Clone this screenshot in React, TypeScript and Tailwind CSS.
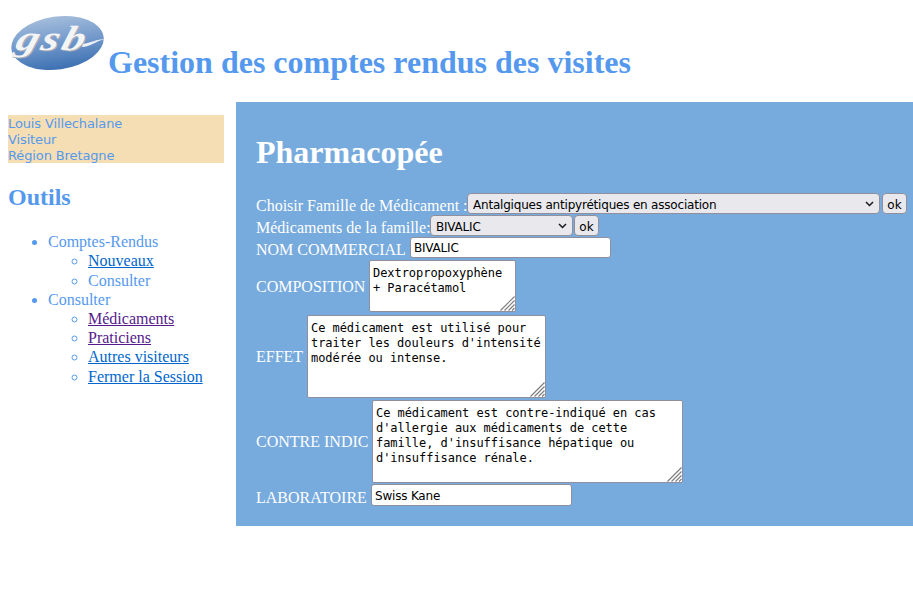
import React from 'react'

const control = 'font-["DejaVu_Sans"] text-[12px] tracking-[-0.2px] text-black'
const inputCls = `w-[201px] rounded-[3px] border border-[#8f8f9d] bg-white px-[3px] pt-[1px] ${control}`
const okBtn = 'h-[21px] w-[25px] rounded-[4px] border border-[#8f8f9d] bg-[#e9e9ed] pt-[2px] text-center font-["DejaVu_Sans"] text-[12px] leading-none text-black'
const row = 'flex h-[22px] items-start whitespace-nowrap'
const areaCls = 'block h-full w-full resize-none overflow-hidden rounded-[2px] border border-[#8f8f9d] bg-white pl-[3px] pr-[2px] pt-[5px] font-["DejaVu_Sans_Mono"] text-[12px] leading-[15px] tracking-[-0.05px] text-black'

const Logo = () => (
	<svg width="98" height="60" viewBox="0 0 98 60" className="shrink-0">
		<defs>
			<linearGradient id="logoFill" x1="0" y1="0" x2="0" y2="1">
				<stop offset="0" stopColor="#a3bcdb" />
				<stop offset="0.5" stopColor="#7198ca" />
				<stop offset="1" stopColor="#3c70b2" />
			</linearGradient>
		</defs>
		<ellipse cx="47.5" cy="29" rx="46.5" ry="26.5" transform="rotate(-8 47.5 29)" fill="url(#logoFill)" />
		<g fontFamily="Liberation Serif" fontStyle="italic" fontWeight="700" fontSize="35" letterSpacing="2">
			<text transform="translate(5 37) skewX(-16) scale(1.3 1)" fill="#a9aeb6">gsb</text>
			<text transform="translate(4 36) skewX(-16) scale(1.3 1)" fill="#f3f4f6">gsb</text>
		</g>
		<path d="M72 33 C80 33 86 27 95 25 C87 25 80 29 73 30Z" fill="#eef0f4" />
	</svg>
)

const Chevron = () => (
	<svg width="9" height="6" viewBox="0 0 9 6" className="pointer-events-none absolute right-[6px] top-[8px]">
		<path d="M1 1 L4.5 4.5 L8 1" fill="none" stroke="#1a1a1a" strokeWidth="1.5" />
	</svg>
)

const Grip = () => (
	<svg width="15" height="15" viewBox="0 0 15 15" className="pointer-events-none absolute bottom-[1px] right-[1px]">
		<path d="M14.5 0.5 L0.5 14.5 M14.5 4.5 L4.5 14.5 M14.5 8.5 L8.5 14.5 M14.5 12 L12 14.5" stroke="#7f7f7f" strokeWidth="1.2" />
	</svg>
)

function Select({ width, value }: { width: string; value: string }) {
	return (
		<div className={`relative ${width}`}>
			<select
				className={`block h-[21px] w-full appearance-none rounded-[4px] border border-[#8f8f9d] bg-[#e9e9ed] pl-[5px] pt-[2px] ${control}`}
				defaultValue={value}
			>
				<option value={value}>{value}</option>
			</select>
			<Chevron />
		</div>
	)
}

function Area({ width, value }: { width: string; value: string }) {
	return (
		<div className={`relative h-[83px] ${width}`}>
			<textarea className={areaCls} defaultValue={value} />
			<Grip />
		</div>
	)
}

export default function App() {
	return (
		<div className='min-h-[593px] bg-white font-["Liberation_Serif",serif] text-[16px] text-[#5599ee]'>
			<header className="flex h-[102px] items-start pl-[10px] pt-[14px]">
				<Logo />
				<h1 className="mt-[30px] whitespace-nowrap text-[32px] font-bold leading-[37px]">
					Gestion des comptes rendus des visites
				</h1>
			</header>

			<div className="flex items-start">
				<aside className="ml-2 w-[216px] shrink-0 pt-[13px]">
					<div className='h-12 bg-[#f5deb3] pt-px font-["DejaVu_Sans"] text-[13px] leading-4 tracking-[-0.12px]'>
						<div>Louis Villechalane</div>
						<div>Visiteur</div>
						<div>Région Bretagne</div>
					</div>
					<h2 className="mt-5 text-[24px] font-bold leading-7">Outils</h2>
					<ul className="mt-[21.2px] list-disc pl-10 leading-[19.2px]">
						<li>
							Comptes-Rendus
							<ul className="list-[circle] pl-10">
								<li><a className="text-[#0066cc] underline">Nouveaux</a></li>
								<li>Consulter</li>
							</ul>
						</li>
						<li>
							Consulter
							<ul className="list-[circle] pl-10">
								<li><a className="text-[#551a8b] underline">Médicaments</a></li>
								<li><a className="text-[#551a8b] underline">Praticiens</a></li>
								<li><a className="text-[#0066cc] underline">Autres visiteurs</a></li>
								<li><a className="text-[#0066cc] underline">Fermer la Session</a></li>
							</ul>
						</li>
					</ul>
				</aside>

				<main className="ml-3 h-[424px] flex-1 bg-[#77aadd] pl-5 pt-[32px] text-white">
					<h2 className="text-[32px] font-bold leading-[37px]">Pharmacopée</h2>
					<div className="mt-[22px] flex flex-col">
						<div className={row}>
							<span className="w-[211px] pt-[1px]">Choisir Famille de Médicament :</span>
							<Select width="w-[413px]" value="Antalgiques antipyrétiques en association" />
							<button className={`${okBtn} ml-[2px]`}>ok</button>
						</div>
						<div className={row}>
							<span className="w-[174px] pt-[1px]">Médicaments de la famille:</span>
							<Select width="w-[143px]" value="BIVALIC" />
							<button className={`${okBtn} ml-[1px]`}>ok</button>
						</div>
						<div className={row}>
							<span className="w-[154px] pt-[1px]">NOM COMMERCIAL</span>
							<input className={`${inputCls} h-[21px]`} defaultValue="BIVALIC" />
						</div>
						<div className="mt-[1px] flex items-center whitespace-nowrap">
							<span className="w-[113px] pt-[2px]">COMPOSITION</span>
							<div className="relative h-[52px] w-[147px]">
								<textarea className={areaCls} defaultValue={'Dextropropoxyphène\n+ Paracétamol'} />
								<Grip />
							</div>
						</div>
						<div className="mt-[3px] flex items-center whitespace-nowrap">
							<span className="w-[51px]">EFFET</span>
							<Area
								width="w-[239px]"
								value={"Ce médicament est utilisé pour traiter les douleurs d'intensité modérée ou intense."}
							/>
						</div>
						<div className="mt-[2px] flex items-center whitespace-nowrap">
							<span className="w-[116px]">CONTRE INDIC</span>
							<Area
								width="w-[311px]"
								value={"Ce médicament est contre-indiqué en cas d'allergie aux médicaments de cette famille, d'insuffisance hépatique ou d'insuffisance rénale."}
							/>
						</div>
						<div className={`${row} mt-[1px]`}>
							<span className="w-[115px] pt-[2px]">LABORATOIRE</span>
							<input className={`${inputCls} h-[22px]`} defaultValue="Swiss Kane" />
						</div>
					</div>
				</main>
			</div>
		</div>
	)
}
